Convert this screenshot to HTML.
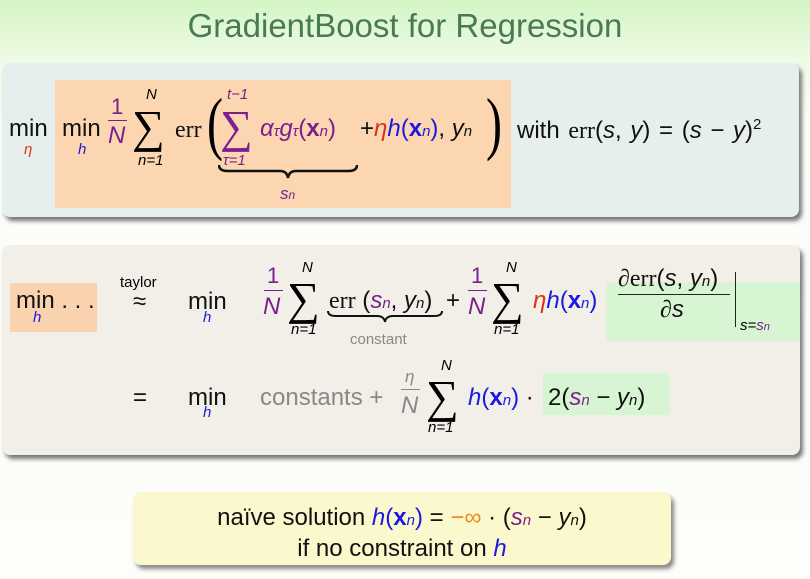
<!DOCTYPE html>
<html><head><meta charset="utf-8"><style>
body{margin:0;width:810px;height:579px;overflow:hidden;background:linear-gradient(#d4f5c4 0px,#eefbe6 60px,#fbfdf7 120px,#fdfdfa 100%);font-family:"Liberation Sans",sans-serif;position:relative}
.a{position:absolute;white-space:nowrap;line-height:1}
.t{font-size:24px;color:#111}
.i{font-style:italic}
.s{font-family:"Liberation Serif",serif}
.p{color:#7a1f8f}.b{color:#1a1ae0}.r{color:#e0301a}.g{color:#888}.o{color:#f08a20}
.sum{font-family:"Liberation Serif",serif;font-size:46px}
.sm{font-size:15px}
.sb{font-size:15px;font-style:italic}
.box{position:absolute}
</style></head><body>
<div class="a" style="left:0;width:810px;text-align:center;top:9px;font-size:33px;color:#4a7a55">GradientBoost for Regression</div>

<div class="box" style="left:2px;top:63px;width:797px;height:154px;background:#e6efee;border-radius:8px;box-shadow:3px 4px 4px #777"></div>
<div class="box" style="left:55px;top:80px;width:456px;height:128px;background:#fcd6b0"></div>

<div class="box" style="left:2px;top:245px;width:798px;height:210px;background:#f1efe8;border-radius:8px;box-shadow:3px 4px 4px #777"></div>
<div class="box" style="left:10px;top:283px;width:87px;height:49px;background:#fbd2ae"></div>
<div class="box" style="left:606px;top:282px;width:194px;height:59px;background:#d8f5d3"></div>
<div class="box" style="left:543px;top:373px;width:127px;height:42px;background:#d8f5d3"></div>

<div class="box" style="left:133px;top:492px;width:538px;height:73px;background:#fbf8cd;border-radius:8px;box-shadow:3px 4px 4px #888"></div>

<!-- row 1 -->
<div class="a t" style="left:9px;top:117px">min</div>
<div class="a sm i r" style="left:24px;top:142px">η</div>
<div class="a t" style="left:62px;top:117px">min</div>
<div class="a sm i b" style="left:78px;top:142px">h</div>
<div class="a t p" style="left:111px;top:96px;font-size:22px">1</div>
<div class="box" style="left:108px;top:120px;width:19px;height:1px;background:#7a1f8f"></div>
<div class="a t p i" style="left:108px;top:124px">N</div>
<div class="a sm i" style="left:146px;top:87px">N</div>
<div class="a sum" style="left:132px;top:104px">∑</div>
<div class="a sm i" style="left:138px;top:153px">n=1</div>
<div class="a t s" style="left:175px;top:118px">err</div>
<div class="a s" style="left:207px;top:90px;font-size:48px;transform:scaleY(1.45);transform-origin:top left">(</div>
<div class="a sm i p" style="left:227px;top:87px">t−1</div>
<div class="a sum p" style="left:220px;top:104px">∑</div>
<div class="a sm i p" style="left:223px;top:153px">τ=1</div>
<div class="a t p" style="left:260px;top:117px"><i>α</i><span class="sb">τ</span><i>g</i><span class="sb">τ</span>(<b>x</b><span class="sb">n</span>)</div>
<svg class="box" style="left:218px;top:164px" width="140" height="16"><path d="M1 1 Q1 7 10 7 L62 7 Q69 7 70 14 Q71 7 78 7 L130 7 Q139 7 139 1" fill="none" stroke="#111" stroke-width="2.5"/></svg>
<div class="a i p" style="left:280px;top:185px;font-size:17px">s<span style="font-size:12px">n</span></div>
<div class="a t" style="left:360px;top:117px">+<i class="r">η</i><span class="b"><i>h</i>(<b>x</b><span class="sb">n</span>)</span>, <i>y</i><span class="sb">n</span></div>
<div class="a s" style="left:486px;top:90px;font-size:48px;transform:scaleY(1.45);transform-origin:top left">)</div>
<div class="a t" style="left:517px;top:117px;word-spacing:2px">with <span class="s">err</span>(<i>s</i>, <i>y</i>) = (<i>s</i> − <i>y</i>)<sup style="font-size:15px">2</sup></div>

<!-- row 2 -->
<div class="a t" style="left:16px;top:289px">min . . .</div>
<div class="a sm i b" style="left:33px;top:310px">h</div>
<div class="a" style="left:120px;top:275px;font-size:15px">taylor</div>
<div class="a t" style="left:133px;top:290px">≈</div>
<div class="a t" style="left:188px;top:290px">min</div>
<div class="a sm i b" style="left:203px;top:310px">h</div>
<div class="a t p" style="left:267px;top:265px;font-size:22px">1</div>
<div class="box" style="left:264px;top:290px;width:19px;height:1px;background:#7a1f8f"></div>
<div class="a t p i" style="left:263px;top:295px">N</div>
<div class="a sm i" style="left:302px;top:260px">N</div>
<div class="a sum" style="left:287px;top:276px">∑</div>
<div class="a sm i" style="left:291px;top:322px">n=1</div>
<div class="a t" style="left:329px;top:289px"><span class="s">err</span> (<i class="p">s</i><span class="sb p">n</span>, <i>y</i><span class="sb">n</span>)</div>
<svg class="box" style="left:327px;top:310px" width="116" height="14"><path d="M1 1 Q1 6 9 6 L50 6 Q57 6 58 12 Q59 6 66 6 L107 6 Q115 6 115 1" fill="none" stroke="#111" stroke-width="2"/></svg>
<div class="a g" style="left:350px;top:332px;font-size:15px">constant</div>
<div class="a t" style="left:446px;top:289px">+</div>
<div class="a t p" style="left:471px;top:265px;font-size:22px">1</div>
<div class="box" style="left:468px;top:290px;width:19px;height:1px;background:#7a1f8f"></div>
<div class="a t p i" style="left:468px;top:295px">N</div>
<div class="a sm i" style="left:506px;top:260px">N</div>
<div class="a sum" style="left:491px;top:276px">∑</div>
<div class="a sm i" style="left:494px;top:322px">n=1</div>
<div class="a t" style="left:533px;top:289px"><i class="r">η</i><span class="b"><i>h</i>(<b>x</b><span class="sb">n</span>)</span></div>
<div class="a t" style="left:618px;top:267px"><span class="s">∂err</span>(<i>s</i>, <i>y</i><span class="sb">n</span>)</div>
<div class="box" style="left:618px;top:294px;width:112px;height:1px;background:#222"></div>
<div class="a t" style="left:660px;top:298px"><span class="s">∂</span><i>s</i></div>
<div class="box" style="left:735px;top:272px;width:1px;height:55px;background:#222"></div>
<div class="a i" style="left:740px;top:318px;font-size:15px">s=<span class="p">s<span style="font-size:11px">n</span></span></div>

<!-- row 3 -->
<div class="a t" style="left:133px;top:386px">=</div>
<div class="a t" style="left:188px;top:386px">min</div>
<div class="a sm i b" style="left:203px;top:405px">h</div>
<div class="a t g" style="left:260px;top:386px">constants +</div>
<div class="a g i" style="left:405px;top:368px;font-size:17px">η</div>
<div class="box" style="left:401px;top:389px;width:19px;height:1px;background:#888"></div>
<div class="a t g i" style="left:401px;top:394px">N</div>
<div class="a sm i" style="left:441px;top:358px">N</div>
<div class="a sum" style="left:426px;top:374px">∑</div>
<div class="a sm i" style="left:428px;top:420px">n=1</div>
<div class="a t" style="left:468px;top:386px"><span class="b"><i>h</i>(<b>x</b><span class="sb">n</span>)</span> ·</div>
<div class="a t" style="left:548px;top:386px">2(<i class="p">s</i><span class="sb p">n</span> − <i>y</i><span class="sb">n</span>)</div>

<!-- bottom -->
<div class="a t" style="left:133px;width:538px;text-align:center;top:506px">naïve solution <span class="b"><i>h</i>(<b>x</b><span class="sb">n</span>)</span> = <span class="o">−∞</span> · (<i class="p">s</i><span class="sb p">n</span> − <i>y</i><span class="sb">n</span>)</div>
<div class="a t" style="left:133px;width:538px;text-align:center;top:537px">if no constraint on <i class="b">h</i></div>
</body></html>
